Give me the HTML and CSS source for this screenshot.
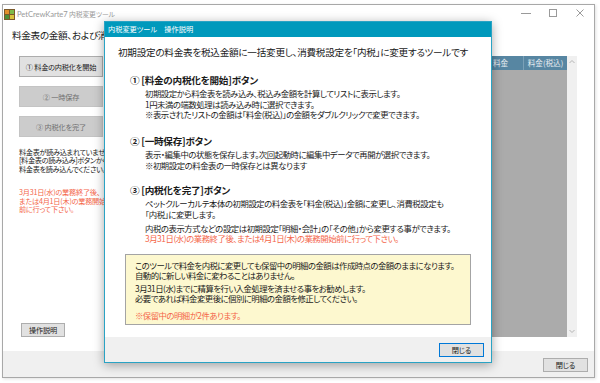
FILE: index.html
```html
<!DOCTYPE html>
<html lang="ja">
<head>
<meta charset="utf-8">
<title>PetCrewKarte7 内税変更ツール</title>
<link rel="stylesheet" href="styles.css">
</head>
<body>
<div class="window">
  <div class="titlebar">
    <svg class="app-icon" width="11" height="11" viewBox="0 0 11 11">
      <rect x="0" y="0" width="11" height="11" fill="#7b5a2c"/>
      <rect x="1" y="1" width="4" height="4" fill="#e3902e"/>
      <rect x="6" y="1" width="4" height="4" fill="#7dbb4a"/>
      <rect x="1" y="6" width="4" height="4" fill="#4f8f3a"/>
      <rect x="6" y="6" width="4" height="4" fill="#d9c43e"/>
    </svg>
    <span class="title"><span class="latin">PetCrewKarte7</span> 内税変更ツール</span>
    <div class="controls">
      <svg class="ctl" width="10" height="10" viewBox="0 0 10 10"><line x1="0" y1="5.5" x2="10" y2="5.5" stroke="#9a9a9a" stroke-width="1"/></svg>
      <svg class="ctl" width="10" height="10" viewBox="0 0 10 10"><rect x="1.5" y="1.5" width="7" height="7" fill="none" stroke="#9a9a9a" stroke-width="1"/></svg>
      <svg class="ctl" width="10" height="10" viewBox="0 0 10 10"><path d="M1.5 1.5 L8.5 8.5 M8.5 1.5 L1.5 8.5" stroke="#9a9a9a" stroke-width="1"/></svg>
    </div>
  </div>
  <div class="content">
    <div class="heading">料金表の金額、および消費税設定を「内税」に変更します。</div>
    <div class="row">
      <div class="side">
        <div class="btn">① 料金の内税化を開始</div>
        <div class="btn disabled">② 一時保存</div>
        <div class="btn disabled">③ 内税化を完了</div>
        <p class="note">料金表が読み込まれていません。<br>[料金表の読み込み]ボタンから<br>料金表を読み込んでください。</p>
        <p class="note red">3月31日(水)の業務終了後、<br>または4月1日(木)の業務開始<br>前に行って下さい。</p>
        <div class="btn help">操作説明</div>
      </div>
      <div class="list">
        <div class="grid">
          <div class="ghead">
            <span class="gcol grow">項目</span>
            <span class="gcol fee">料金</span>
            <span class="gcol feetax">料金(税込)</span>
          </div>
          <div class="gbody"></div>
        </div>
        <div class="scroll">
          <svg width="10" height="10" viewBox="0 0 10 10"><path d="M2.5 6 L5 3.5 L7.5 6" fill="none" stroke="#b5b5b5" stroke-width="1"/></svg>
          <svg width="10" height="10" viewBox="0 0 10 10"><path d="M2.5 4 L5 6.5 L7.5 4" fill="none" stroke="#b5b5b5" stroke-width="1"/></svg>
        </div>
      </div>
    </div>
  </div>
  <div class="footer">
    <div class="btn close">閉じる</div>
  </div>
</div>

<div class="dialog">
  <div class="dtitle">内税変更ツール　操作説明</div>
  <div class="dbody">
    <p class="intro">初期設定の料金表を税込金額に一括変更し、消費税設定を「内税」に変更するツールです</p>

    <h2 class="sec">① [料金の内税化を開始]ボタン</h2>
    <p class="desc">初期設定から料金表を読み込み、税込み金額を計算してリストに表示します。<br>1円未満の端数処理は読み込み時に選択できます。<br>※表示されたリストの金額は「料金(税込)」の金額をダブルクリックで変更できます。</p>

    <h2 class="sec s2">② [一時保存]ボタン</h2>
    <p class="desc">表示・編集中の状態を保存します。次回起動時に編集中データで再開が選択できます。<br>※初期設定の料金表の一時保存とは異なります</p>

    <h2 class="sec s3">③ [内税化を完了]ボタン</h2>
    <p class="desc">ペットクルーカルテ本体の初期設定の料金表を「料金(税込)」金額に変更し、消費税設定も<br>「内税」に変更します。</p>
    <p class="desc gap">内税の表示方式などの設定は初期設定「明細・会計」の「その他」から変更する事ができます。<br><span class="red">3月31日(水)の業務終了後、または4月1日(木)の業務開始前に行って下さい。</span></p>

    <div class="notice">
      <p>このツールで料金を内税に変更しても保留中の明細の金額は作成時点の金額のままになります。<br>自動的に新しい料金に変わることはありません。</p>
      <p class="p2">3月31日(水)までに精算を行い入金処理を済ませる事をお勧めします。<br>必要であれば料金変更後に個別に明細の金額を修正してください。</p>
      <p class="p3 red">※保留中の明細が2件あります。</p>
    </div>
  </div>
  <div class="dfoot">
    <div class="btn default">閉じる</div>
  </div>
</div>
</body>
</html>
```

FILE: styles.css
```css
html, body {
  margin: 0;
  padding: 0;
  background: #ffffff;
}

body {
  font-family: "Noto Sans CJK JP", "Noto Sans", sans-serif;
  font-feature-settings: "palt";
  color: #1a1a1a;
  width: 600px;
  height: 383px;
  overflow: hidden;
}

p, h2 {
  margin: 0;
}

.window {
  margin: 4px 0 0 2px;
  width: 593px;
  height: 374px;
  box-sizing: border-box;
  border: 1px solid #a8a8a8;
  background: #ffffff;
  display: flex;
  flex-direction: column;
  box-shadow: 1px 1px 3px rgba(0, 0, 0, 0.12);
}

.titlebar {
  height: 17px;
  display: flex;
  align-items: center;
  padding-left: 1px;
}

.app-icon {
  display: block;
  margin-top: 2px;
}

.title {
  margin-left: 2px;
  font-size: 6.8px;
  color: #9a9a9a;
  white-space: nowrap;
  letter-spacing: -0.1px;
}

.title .latin {
  font-family: "Lato", "Noto Sans", sans-serif;
  font-size: 7.6px;
  letter-spacing: -0.05px;
}

.controls {
  margin-left: auto;
  display: flex;
  gap: 17px;
  padding-right: 9px;
  margin-top: -1px;
}

.ctl {
  display: block;
}

.content {
  flex: 1;
  display: flex;
  flex-direction: column;
  padding-top: 6px;
}

.heading {
  font-size: 9.6px;
  letter-spacing: -0.3px;
  line-height: 14px;
  padding-left: 9px;
  white-space: nowrap;
}

.row {
  margin-top: 14px;
  height: 281px;
  display: flex;
}

.side {
  width: 84px;
  margin-left: 16px;
  display: flex;
  flex-direction: column;
}

.btn {
  box-sizing: border-box;
  border: 1px solid #adadad;
  background: #e1e1e1;
  font-size: 7.2px;
  letter-spacing: -0.2px;
  color: #1a1a1a;
  display: flex;
  align-items: center;
  justify-content: center;
  white-space: nowrap;
}

.side .btn {
  height: 21px;
  margin-bottom: 9px;
}

.side .btn.disabled {
  background: #cccccc;
  border-color: #c4c4c4;
  color: #707070;
}

.note {
  font-size: 7.2px;
  letter-spacing: -0.35px;
  line-height: 8.4px;
  white-space: nowrap;
  margin-top: 2px;
  color: #222;
}

.note.red {
  margin-top: 15px;
  color: #f4664a;
  letter-spacing: -0.25px;
}

.red {
  color: #f4664a;
}

.side .btn.help {
  margin-top: auto;
  margin-bottom: 0;
  width: 44px;
  height: 14px;
  margin-left: 2px;
}

.list {
  margin-left: 9px;
  margin-right: 17px;
  flex: 1;
  display: flex;
}

.grid {
  flex: 1;
  display: flex;
  flex-direction: column;
}

.ghead {
  height: 14px;
  background: #5786a2;
  display: flex;
  color: #e8eef2;
  font-size: 7.6px;
  line-height: 14px;
}

.gcol {
  text-align: center;
  box-sizing: border-box;
}

.gcol.grow {
  flex: 1;
}

.gcol.fee {
  width: 46px;
  border-left: 1px solid #7aa0b7;
}

.gcol.feetax {
  width: 44px;
  border-left: 1px solid #7aa0b7;
}

.gbody {
  flex: 1;
  background: #ababab;
}

.scroll {
  width: 10px;
  background: #f0f0f0;
  display: flex;
  flex-direction: column;
  justify-content: space-between;
}

.scroll svg {
  display: block;
  margin-top: 1px;
  margin-bottom: 1px;
}

.footer {
  margin-top: 13px;
  height: 26px;
  background: #f0f0f0;
  display: flex;
  justify-content: flex-end;
  padding-top: 7px;
  padding-right: 6px;
  box-sizing: border-box;
}

.btn.close {
  width: 45px;
  height: 14px;
}

/* dialog window */
.dialog {
  position: absolute;
  left: 104px;
  top: 21px;
  width: 388px;
  height: 342px;
  box-sizing: border-box;
  border: 1px solid #2aa3c4;
  background: #ffffff;
  display: flex;
  flex-direction: column;
  box-shadow: 0 2px 10px rgba(0, 0, 0, 0.35);
}

.dtitle {
  height: 15px;
  background: #0099bc;
  color: #ffffff;
  font-size: 7.2px;
  line-height: 14px;
  padding-left: 3px;
  white-space: nowrap;
}

.dbody {
  flex: 1;
  padding-top: 8px;
  white-space: nowrap;
}

.intro {
  margin-left: 13px;
  font-size: 9.6px;
  letter-spacing: -0.25px;
  line-height: 14px;
}

.sec {
  margin-left: 25px;
  margin-top: 14px;
  font-size: 9.6px;
  letter-spacing: -0.25px;
  line-height: 15px;
  font-weight: bold;
}

.sec.s2 {
  margin-top: 14.5px;
}

.sec.s3 {
  margin-top: 13px;
}

.desc {
  margin-left: 40px;
  font-size: 8.4px;
  letter-spacing: -0.45px;
  line-height: 10.5px;
}

.desc.gap {
  margin-top: 3.5px;
}

.notice {
  margin-left: 20px;
  margin-top: 10px;
  width: 346px;
  height: 71px;
  box-sizing: border-box;
  border: 1px solid #a4a4a4;
  background: #fdf8cf;
  padding: 5px 0 0 9px;
  font-size: 8.4px;
  letter-spacing: -0.52px;
  line-height: 10.5px;
}

.notice .p2 {
  margin-top: 2px;
}

.notice .p3 {
  margin-top: 6px;
}

.dfoot {
  height: 25px;
  background: #f0f0f0;
  display: flex;
  justify-content: flex-end;
  padding: 6px 7px 0 0;
  box-sizing: border-box;
}

.btn.default {
  width: 45px;
  height: 14px;
  border-color: #0078d7;
}
```
